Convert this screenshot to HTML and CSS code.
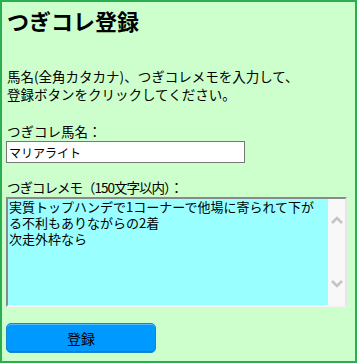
FILE: index.html
```html
<!DOCTYPE html>
<html lang="ja">
<head>
<meta charset="utf-8">
<link rel="stylesheet" href="styles.css">
</head>
<body>
<div class="page">
  <h1 class="title">つぎコレ登録</h1>
  <p class="intro">馬名(全角カタカナ)、つぎコレメモを入力して、<br>登録ボタンをクリックしてください。</p>
  <div class="label">つぎコレ馬名：</div>
  <input class="name" type="text" value="マリアライト">
  <div class="label label-memo">つぎコレメモ（150文字以内）：</div>
  <div class="memo">
    <textarea class="memo-text">実質トップハンデで1コーナーで他場に寄られて下がる不利もありながらの2着
次走外枠なら</textarea>
    <div class="scrollbar">
      <svg class="arrow" width="12" height="8" viewBox="0 0 12 8"><path d="M1 7 L6 2 L11 7" fill="none" stroke="#c4c4c4" stroke-width="2.6"/></svg>
      <svg class="arrow" width="12" height="8" viewBox="0 0 12 8"><path d="M1 1 L6 6 L11 1" fill="none" stroke="#c4c4c4" stroke-width="2.6"/></svg>
    </div>
  </div>
  <button class="submit" type="button">登録</button>
</div>
</body>
</html>
```
FILE: styles.css
```css
* { box-sizing: border-box; }
html, body { margin: 0; padding: 0; }
body {
  font-family: "Noto Sans CJK JP", "Noto Sans", sans-serif;
  color: #000;
  background: #ccffcc;
}
.page {
  width: 357px;
  height: 363px;
  border: 2px solid #2aae4f;
  background: #ccffcc;
  padding: 5px 0 0 4px;
  display: flex;
  flex-direction: column;
  align-items: flex-start;
}
.title {
  margin: 0;
  font-size: 22px;
  line-height: 26px;
  font-weight: bold;
  padding-left: 1px;
}
.intro {
  margin: 34px 0 0 0;
  font-size: 13.5px;
  line-height: 18px;
  padding-left: 1px;
}
.label {
  margin-top: 19px;
  font-size: 13.5px;
  line-height: 18px;
  padding-left: 1px;
}
.label-memo {
  margin-top: 15px;
  letter-spacing: -1px;
}
.name {
  margin: 1px 0 0 0;
  width: 239px;
  height: 22px;
  border: 1px solid #777;
  background: #fff;
  font-family: "Noto Sans CJK JP", sans-serif;
  font-size: 12px;
  padding: 0 2px;
  color: #000;
}
.memo {
  margin-top: 1px;
  width: 341px;
  height: 110px;
  display: flex;
  border-style: solid;
  border-width: 2px;
  border-color: #8a8a8a #e6e6e6 #f4f4f4 #8a8a8a;
}
.memo-text {
  flex: 1;
  height: 100%;
  border: none;
  margin: 0;
  padding: 0 1px;
  background: #99ffff;
  resize: none;
  overflow: hidden;
  font-family: "Noto Sans CJK JP", sans-serif;
  font-size: 13px;
  line-height: 16px;
  color: #000;
  outline: none;
}
.scrollbar {
  width: 17px;
  background: #f8f8f8;
  display: flex;
  flex-direction: column;
  justify-content: space-between;
  align-items: center;
  padding: 17px 0 17px;
}
.arrow { display: block; }
.submit {
  margin-top: 16px;
  width: 150px;
  height: 30px;
  border-radius: 5px;
  background: #0099ff;
  border: 1px solid #1485d0;
  box-shadow: inset 0 1px 0 #55bbff, inset 0 -1px 0 #0080e0;
  font-family: "Noto Sans CJK JP", sans-serif;
  font-size: 14px;
  color: #000;
  padding: 0;
}
```
